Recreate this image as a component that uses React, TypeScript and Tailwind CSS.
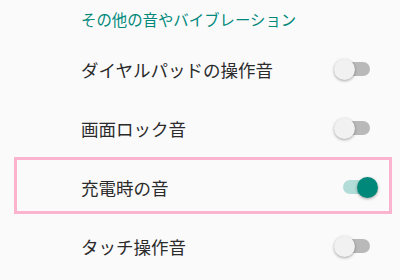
import React from "react";

const font = { fontFamily: '"Noto Sans CJK JP", "Noto Sans", sans-serif' };

function Switch({ on }: { on: boolean }) {
  if (on) {
    return (
      <div className="flex h-[14px] w-[34px] items-center justify-end rounded-full bg-[#b2dcd7]">
        <div className="mr-[-1px] h-[21px] w-[21px] shrink-0 rounded-full bg-[#00897b] shadow-[0_1px_3px_rgba(0,0,0,0.35)]" />
      </div>
    );
  }
  return (
    <div className="flex h-[14px] w-[34px] items-center rounded-full bg-[#b9b9b9]">
      <div className="ml-[-2px] h-[21px] w-[21px] shrink-0 rounded-full bg-[#f1f1f1] shadow-[0_1px_3px_rgba(0,0,0,0.35)]" />
    </div>
  );
}

function Row({ label, on }: { label: string; on: boolean }) {
  return (
    <div className={`flex h-[59px] items-center pl-[81px] ${on ? "pr-[23px]" : "pr-[30px]"}`}>
      <span className="flex-1 text-[17.5px] leading-none text-[#2b2b2b]">{label}</span>
      <div className="mt-[-1px]">
        <Switch on={on} />
      </div>
    </div>
  );
}

export default function App() {
  return (
    <div className="relative h-[280px] w-[400px] overflow-hidden bg-[#fafafa]" style={font}>
      <div className="flex h-[40px] items-center pl-[81px]">
        <span className="text-[15.4px] leading-none text-[#00897b]">その他の音やバイブレーション</span>
      </div>
      <Row label="ダイヤルパッドの操作音" on={false} />
      <Row label="画面ロック音" on={false} />
      <Row label="充電時の音" on={true} />
      <Row label="タッチ操作音" on={false} />
      <div className="pointer-events-none absolute left-[14px] top-[157px] h-[57px] w-[378px] border-[3px] border-[#fcb3cd]" />
    </div>
  );
}
